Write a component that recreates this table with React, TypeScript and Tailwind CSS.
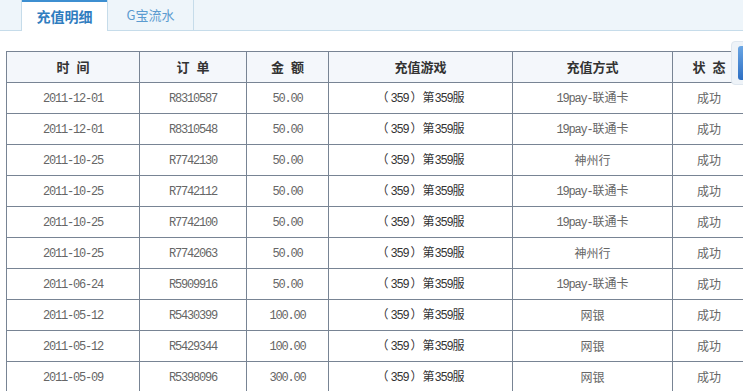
import React from "react";

const rows = [
  ["2011-12-01", "R8310587", "50.00", "19pay-联通卡"],
  ["2011-12-01", "R8310548", "50.00", "19pay-联通卡"],
  ["2011-10-25", "R7742130", "50.00", "神州行"],
  ["2011-10-25", "R7742112", "50.00", "19pay-联通卡"],
  ["2011-10-25", "R7742100", "50.00", "19pay-联通卡"],
  ["2011-10-25", "R7742063", "50.00", "神州行"],
  ["2011-06-24", "R5909916", "50.00", "19pay-联通卡"],
  ["2011-05-12", "R5430399", "100.00", "网银"],
  ["2011-05-12", "R5429344", "100.00", "网银"],
  ["2011-05-09", "R5398096", "300.00", "网银"],
];

const mono = "font-['Liberation_Mono','Noto_Sans_CJK_SC',monospace] tracking-[-1.2px]";
const cjk = "font-['Noto_Sans_CJK_SC',sans-serif]";

function Mixed({ text }: { text: string }) {
  const parts = text.match(/[\x00-\x7f]+|[^\x00-\x7f]+/g) || [];
  return (
    <>
      {parts.map((p, i) =>
        /^[\x00-\x7f]+$/.test(p) ? (
          <span key={i} className={mono}>
            {p}
          </span>
        ) : (
          <span key={i} className={cjk}>
            {p}
          </span>
        )
      )}
    </>
  );
}

function Head({ text }: { text: string }) {
  const parts = text.split(" ");
  return (
    <span className="inline-flex items-center justify-center gap-[7px]">
      {parts.map((p, i) => (
        <span key={i}>{p}</span>
      ))}
    </span>
  );
}

export default function App() {
  return (
    <div className="relative w-[743px] h-[391px] overflow-hidden bg-white">
      {/* tab bar */}
      <div className="flex h-[31px] bg-[#eef5fa] border-b border-[#c6dcea]">
        <div className="w-[22px] border-r border-[#c6dcea]" />
        <div className="w-[85px] h-[31px] bg-white border-t-2 border-[#3d8fd1] flex items-center justify-center text-[14px] font-bold text-[#2f7dbf] font-['Noto_Sans_CJK_SC',sans-serif]">
          充值明细
        </div>
        <div className="w-[87px] border-r border-l border-[#c6dcea] flex items-center justify-center text-[13px] text-[#5b9bd0] font-['Noto_Sans_CJK_SC',sans-serif]">
          G宝流水
        </div>
      </div>

      <div className="pt-[20px] pl-[6px]">
        <table className="table-fixed border-collapse w-[739px] text-[12px] text-[#666]">
          <colgroup>
            <col className="w-[133px]" />
            <col className="w-[107px]" />
            <col className="w-[82px]" />
            <col className="w-[184px]" />
            <col className="w-[160px]" />
            <col className="w-[73px]" />
          </colgroup>
          <thead>
            <tr className="h-[31px] bg-[#f4f7fb]">
              {["时 间", "订 单", "金 额", "充值游戏", "充值方式", "状 态"].map((h) => (
                <th
                  key={h}
                  className="border border-[#788494] p-0 text-center text-[13px] font-bold text-[#333] font-['Noto_Sans_CJK_SC',sans-serif]"
                >
                  <Head text={h} />
                </th>
              ))}
            </tr>
          </thead>
          <tbody>
            {rows.map((r, i) => (
              <tr key={i} className="h-[31px]">
                <td className="border border-[#788494] p-0 text-center">
                  <span className={mono}>{r[0]}</span>
                </td>
                <td className="border border-[#788494] p-0 text-center">
                  <span className={mono}>{r[1]}</span>
                </td>
                <td className="border border-[#788494] p-0 text-center">
                  <span className={mono}>{r[2]}</span>
                </td>
                <td className="border border-[#788494] p-0 text-center text-[#333]">
                  <span className={cjk}>（</span>
                  <span className={`${mono} mx-[2px]`}>359</span>
                  <span className={cjk}>）第</span>
                  <span className={mono}>359</span>
                  <span className={cjk}>服</span>
                </td>
                <td className="border border-[#788494] p-0 text-center">
                  <Mixed text={r[3]} />
                </td>
                <td className="border border-[#788494] p-0 text-center">
                  <span className={cjk}>成功</span>
                </td>
              </tr>
            ))}
          </tbody>
        </table>
      </div>

      {/* floating side button */}
      <div className="absolute left-[731px] top-[41px] w-[30px] h-[44px] rounded-[4px] bg-[#eef3f8] border border-[#dfe7ef] p-[4px] pl-[6px]">
        <div className="w-[20px] h-[34px] rounded-[3px] bg-gradient-to-b from-[#6aa6e4] to-[#2d6fc3]" />
      </div>
    </div>
  );
}
